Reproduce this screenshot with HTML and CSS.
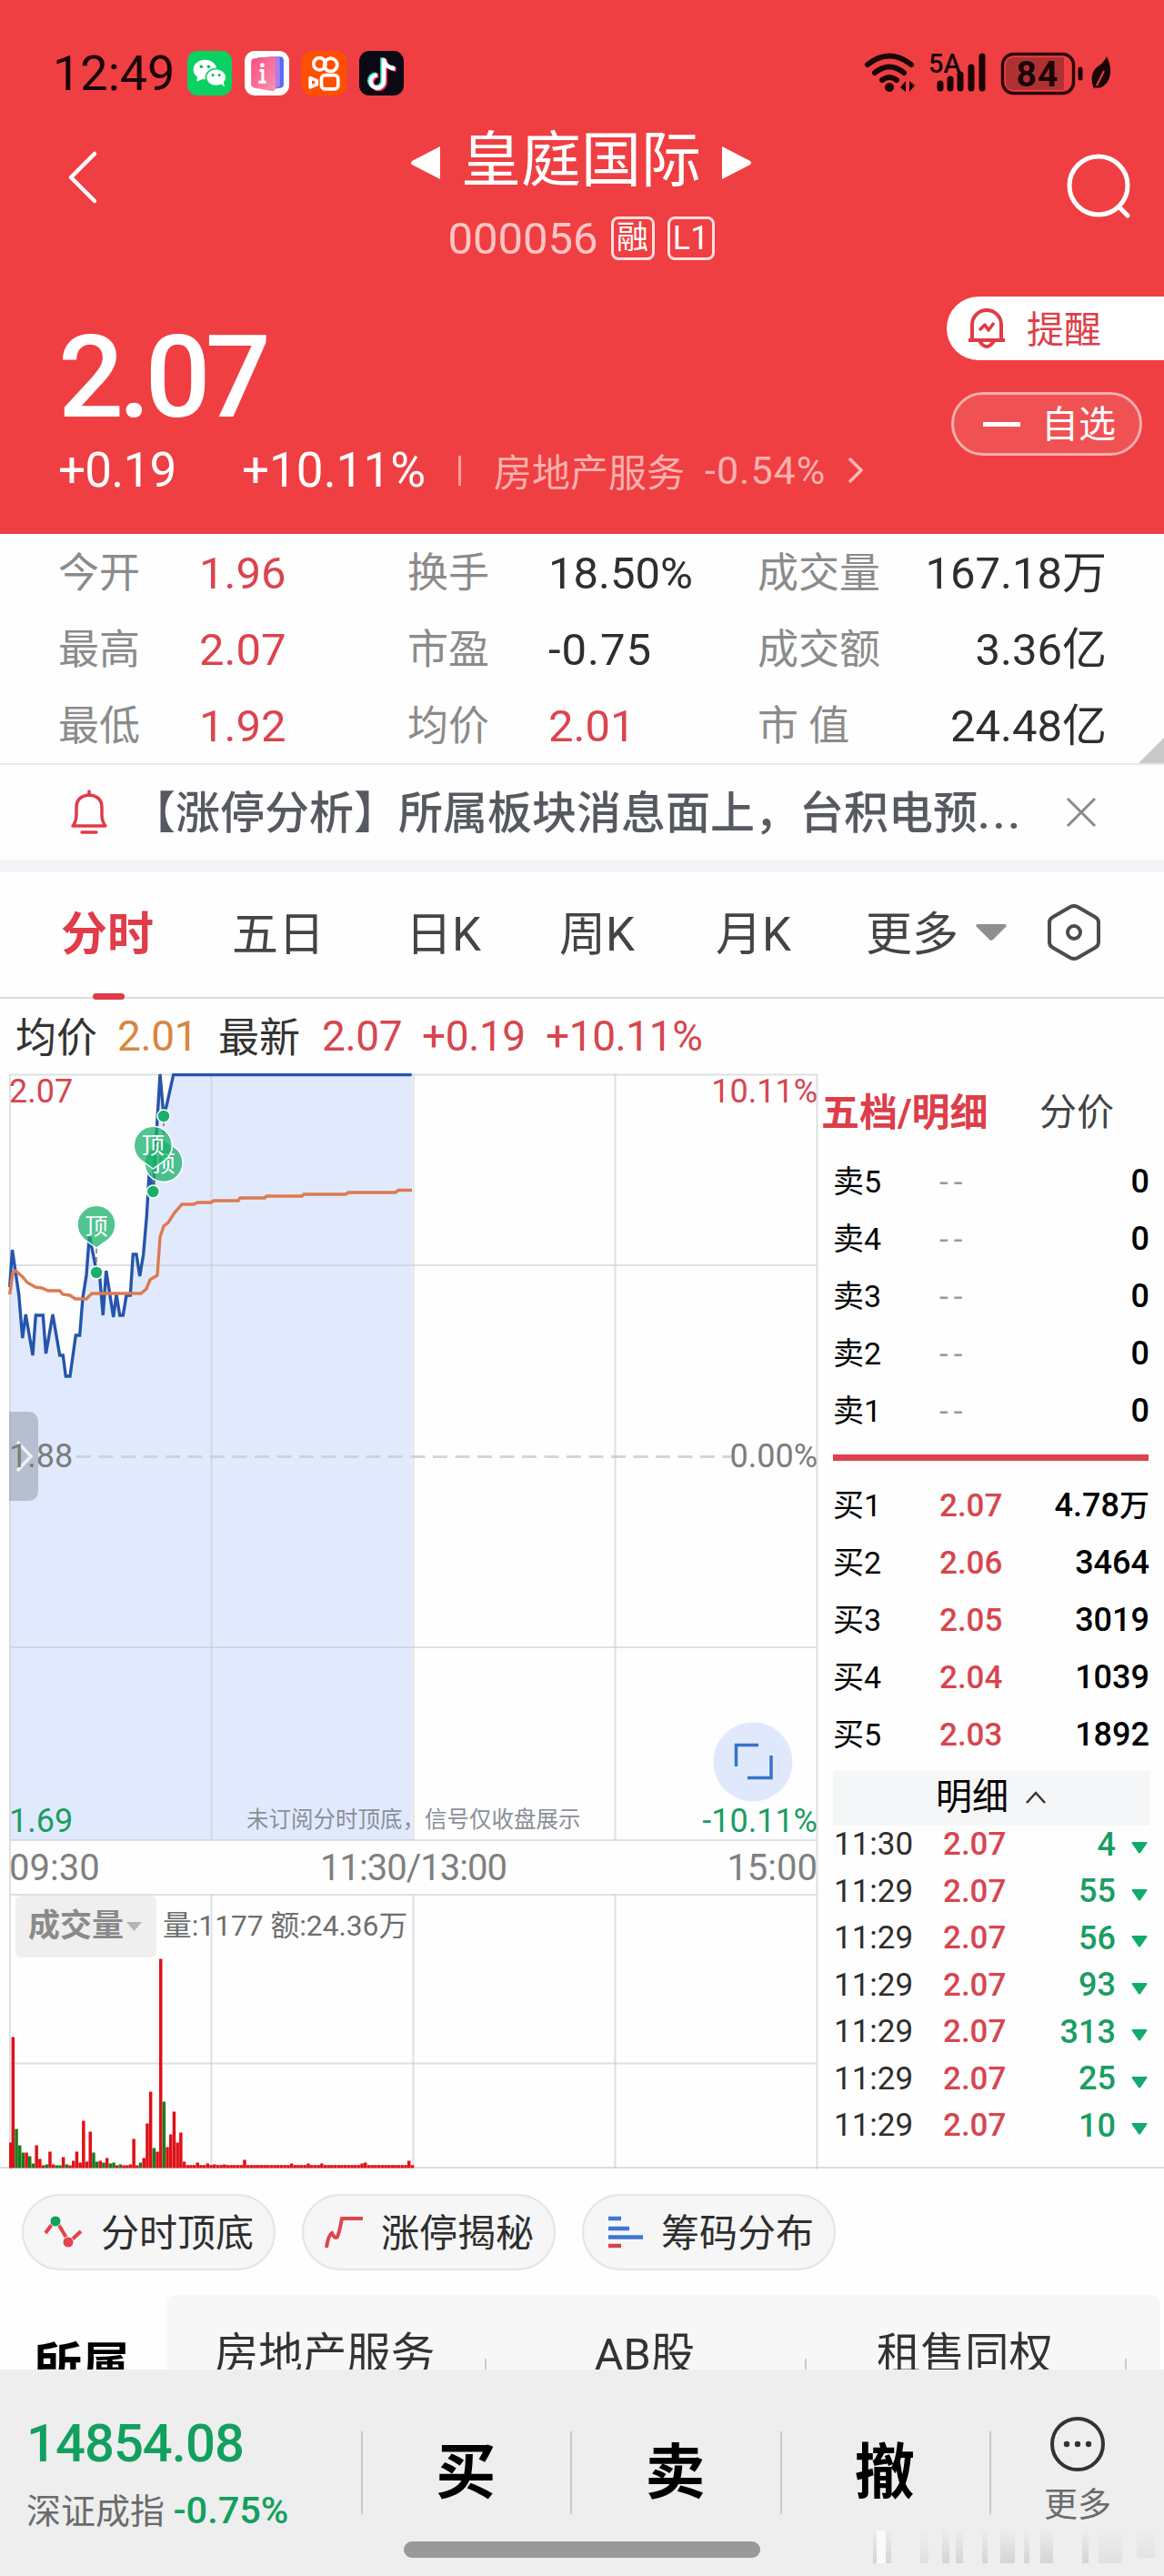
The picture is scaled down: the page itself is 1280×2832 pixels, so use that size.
FILE: index.html
```html
<!DOCTYPE html>
<html lang="zh-CN">
<head>
  <meta charset="UTF-8">
  <title>皇庭国际 000056</title>
  <link rel="stylesheet" href="styles.css">
</head>
<body>

<header class="header">
  <div class="status-bar">
    <span class="clock">12:49</span>
    <svg class="app-icon" viewBox="0 0 48 48">
      <rect width="48" height="48" rx="11" fill="#0bd064"/>
      <ellipse cx="19" cy="20" rx="12.500" ry="10.500" fill="#fff"/>
      <path d="M11 27l-1 6 7-3z" fill="#fff"/>
      <ellipse cx="31" cy="28.500" rx="11" ry="9.300" fill="#fff" stroke="#0bd064" stroke-width="1.500"/>
      <path d="M36 35l4 4-1-7z" fill="#fff"/>
      <circle cx="15" cy="17" r="1.700" fill="#0bb457"/><circle cx="23" cy="17" r="1.700" fill="#0bb457"/>
      <circle cx="27.500" cy="26" r="1.500" fill="#0bb457"/><circle cx="34.500" cy="26" r="1.500" fill="#0bb457"/>
    </svg>
    <svg class="app-icon" viewBox="0 0 48 48">
      <defs><linearGradient id="book" x1="0" y1="0" x2="1" y2="1"><stop offset="0" stop-color="#fb4b7b"/><stop offset="1" stop-color="#f894b4"/></linearGradient></defs>
      <rect width="48" height="48" rx="11" fill="#fff"/>
      <path d="M14 7l24-1q4 0 4 4v26q0 4-4 4l-14 2z" fill="#4f6df2"/>
      <path d="M12 8l22-2q4 0 4 4v28l-8 4z" fill="#b57bea"/>
      <path d="M7 12q0-4 4-4l18-2q4 0 4 4v30q0 4-4 3l-18-3q-4-1-4-4z" fill="url(#book)"/>
      <circle cx="19" cy="15.500" r="2.400" fill="#fff"/>
      <path d="M16 21h3.500v12M15 33.500h8" stroke="#fff" stroke-width="3" fill="none"/>
    </svg>
    <svg class="app-icon" viewBox="0 0 48 48">
      <rect width="48" height="48" rx="11" fill="#ff5000"/>
      <g fill="none" stroke="#fff" stroke-width="3.600">
        <circle cx="19" cy="14" r="6.500"/><circle cx="31" cy="15" r="7"/>
        <rect x="21" y="26" width="18" height="15" rx="4"/>
        <path d="M9 29v10l7-3v-4z" stroke-linejoin="round"/>
      </g>
    </svg>
    <svg class="app-icon" viewBox="0 0 48 48">
      <rect width="48" height="48" rx="11" fill="#0b0a14"/>
      <g fill="none" stroke-width="4.500">
        <path d="M25 7v25a7 7 0 1 1-7-7M25 9q2 8 12 9" stroke="#22e5e0"/>
        <path d="M28 9v25a7 7 0 1 1-7-7M28 11q2 8 12 9" stroke="#fb2c55"/>
        <path d="M26.500 8v25a7 7 0 1 1-7-7M26.500 10q2 8 12 9" stroke="#fff"/>
      </g>
    </svg>
    <svg class="signals" width="280" height="56" viewBox="945 52 280 56">
      <g fill="none" stroke="#1a0506" stroke-width="6" stroke-linecap="round">
        <path d="M954 71q24-19 48 0"/><path d="M962 80q16-13 32 0"/><path d="M970 88q8-6 16 0"/>
      </g>
      <circle cx="978" cy="96" r="5" fill="#1a0506"/>
      <path d="M990 96l6-7v12zM1006 94l-6-5v12z" fill="#1a0506"/>
      <text class="net" x="1021" y="80">5A</text>
      <g stroke="#1a0506" stroke-width="7" stroke-linecap="round">
        <path d="M1034 92v5M1045 87v10M1056 82v15M1068 74v23M1080 62v35"/>
      </g>
      <rect x="1102.500" y="59.500" width="78" height="43" rx="12" fill="none" stroke="#2b0708" stroke-width="3.500"/>
      <path d="M1115 63h55v36h-55q-9 0-9-9v-18q0-9 9-9z" fill="#b03134"/>
      <text class="battery" x="1141" y="95">84</text>
      <path d="M1188 76v10" stroke="#1a0506" stroke-width="5" stroke-linecap="round"/>
      <path d="M1217 62c6 12 6 26-4 33q-5 3-9 1l-1 2q-6-16 3-24 8-5 11-12z" fill="#1a0506"/>
      <path d="M1214 78l-8 16" stroke="#ef3f42" stroke-width="2"/>
    </svg>
  </div>

  <div class="title-bar">
    <svg class="back" width="34" height="60" viewBox="0 0 34 60"><path d="M30 4L4 30l26 26" fill="none" stroke="#fff" stroke-width="4.500" stroke-linecap="round" stroke-linejoin="round"/></svg>
    <div class="title">
      <div class="name">
        <svg width="34" height="38" viewBox="0 0 34 38"><path d="M33 1v36L2 21q-2-2 0-4z" fill="#fff"/></svg>
        <h1>皇庭国际</h1>
        <svg width="34" height="38" viewBox="0 0 34 38"><path d="M1 1v36l31-16q2-2 0-4z" fill="#fff"/></svg>
      </div>
      <div class="code">000056 <span class="tag">融</span><span class="tag l1">L1</span></div>
    </div>
    <svg class="search" width="76" height="76" viewBox="0 0 76 76"><g fill="none" stroke="#fff" stroke-width="5" stroke-linecap="round"><circle cx="36" cy="36" r="32"/><path d="M59 60l9 9"/></g></svg>
  </div>

  <div class="quote">
    <div class="price">2.07</div>
    <div class="change">
      <span class="diff">+0.19</span><span class="pct">+10.11%</span><i></i>
      <span class="sector">房地产服务</span><span class="sector-pct">-0.54%</span>
      <svg width="18" height="30" viewBox="0 0 18 30"><path d="M2 2l13 13L2 28" fill="none" stroke="#fbb7b5" stroke-width="3.500"/></svg>
    </div>
  </div>
  <div class="quote-actions">
    <button class="remind">
      <svg width="44" height="48" viewBox="0 0 44 48"><g fill="none" stroke="#e03c46" stroke-width="4" stroke-linejoin="round"><path d="M2 37h40M6 37V20a16 16 0 0 1 32 0v17"/><path d="M14 38q8 12 16 0"/><path d="M14 26l6-6 4 6 6-8" stroke-width="3.500"/></g></svg>
      提醒
    </button>
    <button class="watch"><b></b>自选</button>
  </div>
</header>

<section class="stats">
  <span>今开</span><em class="up">1.96</em><span>换手</span><em>18.50%</em><span>成交量</span><em class="last">167.18万</em>
  <span>最高</span><em class="up">2.07</em><span>市盈</span><em class="minus">-0.75</em><span>成交额</span><em class="last">3.36亿</em>
  <span>最低</span><em class="up">1.92</em><span>均价</span><em class="up">2.01</em><span>市 值</span><em class="last">24.48亿</em>
  <svg class="corner" width="28" height="28" viewBox="0 0 28 28"><path d="M28 0v28H0z" fill="#c9c9c9"/></svg>
</section>

<section class="notice">
  <svg width="42" height="50" viewBox="0 0 42 50"><g fill="none" stroke="#e03c46" stroke-width="3.500" stroke-linejoin="round"><path d="M3 40q4-5 4-12V20q0-13 14-14 14 1 14 14v8q0 7 4 12zM21 6V2M13 47h16" stroke-linecap="round"/></g></svg>
  <p>【涨停分析】所属板块消息面上，台积电预<span>...</span></p>
  <svg width="34" height="34" viewBox="0 0 34 34"><path d="M2 2l30 30M32 2L2 32" stroke="#8a8a8c" stroke-width="3"/></svg>
</section>

<nav class="periods">
  <a class="active">分时</a><a>五日</a><a>日K</a><a>周K</a><a>月K</a><a>更多</a>
  <svg class="drop" width="34" height="18" viewBox="0 0 34 18"><path d="M2 0h30q3 1 1 3L19 17q-2 2-4 0L1 3q-2-2 1-3z" fill="#8f8f8f"/></svg>
  <svg class="hex" width="58" height="64" viewBox="0 0 58 64"><g fill="none" stroke="#4c4c4c" stroke-width="4" stroke-linejoin="round"><path d="M25 4q4-2 8 0l19 11q4 2 4 6v22q0 4-4 6L33 60q-4 2-8 0L6 49q-4-2-4-6V21q0-4 4-6z"/><circle cx="29" cy="32" r="7"/></g></svg>
</nav>

<div class="summary">
  <span>均价</span><em class="avg">2.01</em><span>最新</span><em>2.07</em><em>+0.19</em><em>+10.11%</em>
</div>

<main class="board">
  <svg class="chart" width="900" height="1206" viewBox="0 0 900 1206">
    <!-- price area -->
    <path id="area" fill="#e1eafd"/>
    <g class="grid">
      <path d="M11 1V1205M898.500 1V1205M10 1.500H899M10 211H898M10 631H898M10 843H899M10 903H899M10 1088.500H898"/>
      <path d="M232.500 1V843M454.500 1V843M676.500 1V843M232.500 903V1204M454.500 903V1204M676.500 903V1204"/>
      <path class="dash" d="M84 421.500H805"/>
    </g>
    <polyline id="priceLine" class="price-line"/>
    <polyline class="avg-line" points="10.700,243 14,219 17.300,217 25,224 30,230 39,235 46,236 53,239 65.700,239 69,243 76.700,244 83,248 95,248 101,242 155,242 161,237 165,227 173,222 176,180 180,168 185,164 192,153 200,144 213,144 217,142 232,142 235,140 262,140 264,137 291,137 293,135 332,135 334,133 380,133 383,131 435,131 438,128.500 453,128.500"/>
    <!-- top signals -->
    <g class="pin">
      <path class="stem" d="M106 192v22M180 52v20M168.300 105v20"/>
      <path d="M180 73l-13 9a21 21 0 1 0 26 0z"/><text x="180" y="108">顶</text>
      <path d="M168.300 105l-14-10a21 21 0 1 1 28 0z"/><text x="168.300" y="88">顶</text>
      <path d="M106 192l-14-10a21 21 0 1 1 28 0z"/><text x="106" y="177">顶</text>
      <circle cx="106" cy="219" r="7"/><circle cx="168.300" cy="130" r="7"/><circle cx="180" cy="47" r="7"/>
    </g>
    <path d="M10 372h20q12 0 12 12v74q0 12-12 12H10z" fill="#8b93a3" fill-opacity=".5"/>
    <path d="M19 405l15 16-15 16" fill="none" stroke="#fff" stroke-opacity=".8" stroke-width="3.500"/>
    <g class="scale">
      <text class="up" x="10" y="32">2.07</text><text class="up end" x="899" y="32">10.11%</text>
      <text x="10" y="433">1.88</text><text class="end" x="899" y="433">0.00%</text>
      <text class="down" x="10" y="834">1.69</text><text class="down end" x="899" y="834">-10.11%</text>
    </g>
    <text class="hint" x="271" y="829">未订阅分时顶底，信号仅收盘展示</text>
    <g class="axis">
      <text x="10" y="887">09:30</text><text class="mid" x="455" y="887" textLength="206">11:30/13:00</text><text class="end" x="899" y="887">15:00</text>
    </g>
    <circle cx="828" cy="757" r="43.500" fill="#dfe9fb"/>
    <path d="M809.500 762v-23.500H834M848 750v24.500h-26" fill="none" stroke="#3a73c9" stroke-width="3.500"/>
    <!-- volume -->
    <rect x="17" y="904" width="155" height="68" rx="6" fill="#efefef"/>
    <text class="vol-name" x="31" y="949">成交量</text>
    <path d="M139 933h17l-8.500 10z" fill="#b5b5b5"/>
    <text class="vol-text" x="179" y="948">量:1177 额:24.36万</text>
    <g id="volume"></g>
  </svg>

  <aside class="depth">
    <div class="depth-tabs"><b>五档/明细</b><span>分价</span></div>
    <div class="orders sell">
      <p><span>卖5</span><i>--</i><b>0</b></p>
      <p><span>卖4</span><i>--</i><b>0</b></p>
      <p><span>卖3</span><i>--</i><b>0</b></p>
      <p><span>卖2</span><i>--</i><b>0</b></p>
      <p><span>卖1</span><i>--</i><b>0</b></p>
    </div>
    <hr>
    <div class="orders">
      <p><span>买1</span><i>2.07</i><b>4.78<small>万</small></b></p>
      <p><span>买2</span><i>2.06</i><b>3464</b></p>
      <p><span>买3</span><i>2.05</i><b>3019</b></p>
      <p><span>买4</span><i>2.04</i><b>1039</b></p>
      <p><span>买5</span><i>2.03</i><b>1892</b></p>
    </div>
    <h3>明细 <svg width="24" height="16" viewBox="0 0 24 16"><path d="M2 14L12 3l10 11" fill="none" stroke="#333" stroke-width="2.500"/></svg></h3>
    <div class="trades" id="trades"></div>
  </aside>
</main>

<section class="tools">
  <button>
    <svg width="46" height="38" viewBox="0 0 46 38"><path d="M3 20L14 5l15 25 13-12" fill="none" stroke="#e0444c" stroke-width="4"/><circle cx="14" cy="7" r="6" fill="#12a05f" stroke="#f6f6f7"/><circle cx="28" cy="30" r="6" fill="#e0444c" stroke="#f6f6f7"/></svg>
    <span>分时顶底</span>
  </button>
  <button>
    <svg width="46" height="38" viewBox="0 0 46 38"><path d="M4 36q2-14 6-16 3 7 6 4 2-4 5-20h23" fill="none" stroke="#e0444c" stroke-width="4"/></svg>
    <span>涨停揭秘</span>
  </button>
  <button>
    <svg width="46" height="38" viewBox="0 0 46 38"><path d="M6 4h14M6 15h23M6 24.500h38" stroke="#3f76d2" stroke-width="4.500"/><path d="M6 34h14" stroke="#d2444f" stroke-width="4.500"/></svg>
    <span>筹码分布</span>
  </button>
</section>

<section class="belong">
  <h2>所属</h2>
  <div class="plates"><span>房地产服务</span><span>AB股</span><span>租售同权</span></div>
</section>

<footer class="trade-bar">
  <div class="index">
    <strong>14854.08</strong>
    <p>深证成指 <b>-0.75%</b></p>
  </div>
  <button>买</button>
  <button>卖</button>
  <button>撤</button>
  <div class="more">
    <svg width="62" height="62" viewBox="0 0 62 62"><circle cx="31" cy="31" r="28" fill="none" stroke="#333" stroke-width="4"/><g fill="#333"><circle cx="19" cy="31" r="3.200"/><circle cx="31" cy="31" r="3.200"/><circle cx="43" cy="31" r="3.200"/></g></svg>
    更多
  </div>
  <svg class="smear" width="320" height="38" viewBox="0 0 320 38">
    <defs><linearGradient id="fade" x1="0" y1="0" x2="0" y2="1"><stop offset="0" stop-color="#999" stop-opacity="0"/><stop offset="1" stop-color="#999" stop-opacity=".3"/></linearGradient></defs>
    <g fill="url(#fade)"><path d="M0 0h20v38H0zM76 0h8v38h-8zM91 0h8v38h-8zM120 0h6v38h-6zM140 0h16v38h-16zM166 0h6v38h-6zM184 0h14v38h-14zM230 0h7v38h-7z"/><path d="M52 0h9v38h-9zM248 0h26v38h-26zM290 0h20v32h-20z" opacity=".5"/></g>
    <path d="M4 2h10v36H4z" fill="#fafafa"/>
  </svg>
  <div class="home"></div>
</footer>

<script>
const price = '10.7,235 13.5,194 20.7,243 24.7,291 28.3,265 36,310 39.3,266 47.3,266 50.5,308 58,265 65.7,310 69.3,310 72.3,333 77,333 83.3,288 87.7,288 91,247 95,222 98.3,178 106,217 109.5,222 113.3,266 116.7,217 124.7,268 128,243 131.7,266 135.3,266 139,244 143.3,244 146.3,199 150,199 153.7,223 157.7,199 161.3,157 164,110 168.3,130 172,67 176,1 180,47 183.3,35 190.7,1.5 452.7,1.5';
document.getElementById('priceLine').setAttribute('points', price);
document.getElementById('area').setAttribute('d', 'M' + price.replace(/ /g, 'L') + 'V843H10.7Z');

// minute volumes, g = falling minute
const volumes = '28 144 43g 25g 17g 17 13g 5g 25 10 3 4g 18 4 3g 3g 12 4g 3 8 18 6 52 7 40 17g 7g 8 6g 11 5g 6g 3 4g 3 3 4 32 3 6g 11 49 84 22g 18 230 73g 23 37 62 28 39 7'.split(' ');
const spikes = { 56: 6, 59: 5, 61: 4, 64: 4, 70: 9, 84: 5, 89: 5, 93: 5, 105: 5, 106: 6, 119: 8 };
let bars = '';
for (let i = 0; i <= 120; i++) {
  const v = volumes[i] || String(spikes[i] || 3.3);
  const h = parseFloat(v);
  const x = Math.max(10, 8.9 + i * 3.69);
  bars += `<rect x="${x.toFixed(1)}" y="${1203.5 - h}" width="3.5" height="${h}" fill="${v.includes('g') ? '#1c7a1c' : '#de1216'}"/>`;
}
document.getElementById('volume').innerHTML = bars;

const trades = [['11:30', 4], ['11:29', 55], ['11:29', 56], ['11:29', 93], ['11:29', 313], ['11:29', 25], ['11:29', 10]];
document.getElementById('trades').innerHTML = trades.map(t =>
  `<p><span>${t[0]}</span><i>2.07</i><b>${t[1]}</b><svg width="18" height="13" viewBox="0 0 18 13"><path d="M1 0h16q1 1 0 2l-7 10q-1 1-2 0L1 2q-1-1 0-2z" fill="#10ab6d"/></svg></p>`
).join('');
</script>

</body>
</html>
```
FILE: styles.css
```css
* { box-sizing: border-box; margin: 0; padding: 0; }
body { width: 1280px; height: 2832px; overflow: hidden; background: #fefefe; color: #333; font-family: Roboto, "Noto Sans CJK SC", sans-serif; }
svg { display: block; flex: none; }
em, i { font-style: normal; }
button { border: none; font-family: inherit; color: inherit; }

/* header */
.header { position: relative; height: 587px; background: #ef3f42; color: #fff; }
.status-bar { height: 160px; display: flex; align-items: center; padding-left: 58px; color: #1a0506; }
.clock { width: 148px; font-size: 54px; }
.app-icon { width: 49px; height: 49px; margin-right: 14px; }
.signals { margin-left: 487px; }
.net { font-size: 29px; font-weight: 500; fill: #1a0506; }
.battery { font-size: 39px; font-weight: 700; fill: #1a0506; text-anchor: middle; letter-spacing: 1px; }
.title-bar { height: 140px; display: flex; justify-content: space-between; padding: 0 32px 0 74px; }
.back { margin-top: 5px; }
.search { margin-top: 8px; }
.title { width: 700px; padding-right: 2px; }
.name { height: 68px; display: flex; align-items: center; justify-content: center; gap: 22px; margin-top: -16px; }
.name svg { margin-top: 2px; }
.name h1 { font-size: 66px; font-weight: 400; line-height: 68px; margin-top: -2px; }
.code { display: flex; align-items: center; justify-content: center; height: 50px; margin-top: 25px; font-size: 49px; color: #fbc5c4; }
.tag { width: 48px; height: 48px; margin-left: 14px; border: 3px solid #fdd; border-radius: 8px; font-size: 35px; line-height: 42px; text-align: center; color: #fff; }
.tag.l1 { width: 52px; font-size: 36px; }
.quote { padding-left: 64px; }
.price { height: 175px; padding-top: 20px; font-size: 127px; font-weight: 500; line-height: 190px; letter-spacing: -6px; }
.change { display: flex; align-items: center; height: 84px; font-size: 53px; }
.diff { width: 202px; letter-spacing: -0.8px; }
.pct { width: 238px; }
.change i { width: 3px; height: 33px; background: #f9a3a1; }
.sector { width: 234px; padding: 0 0 2px 36px; font-size: 42px; color: #fbb0ae; white-space: nowrap; }
.sector-pct { width: 155px; padding-left: 34px; font-size: 43px; letter-spacing: 1px; color: #fbb0ae; margin-right: 36px; }
.quote-actions { position: absolute; top: 326px; right: 0; width: 239px; }
.quote-actions button { display: flex; align-items: center; height: 70px; font-size: 41px; }
.remind { width: 239px; padding: 0 0 4px 22px; gap: 22px; background: #fff; color: #dc3f49; border-radius: 35px 0 0 35px; }
.remind svg { margin-top: 4px; }
.quote-actions .watch { width: 210px; margin: 35px 0 0 5px; padding: 0 0 6px 32px; gap: 23px; background: #f05254; border: 3px solid #f9aeac; border-radius: 35px; color: #fff; }
.watch b { width: 41px; height: 5px; background: #fff; margin-top: 6px; }

/* stats */
.stats { position: relative; display: grid; grid-template-columns: 155px 229px 155px 230px 155px 229px; grid-auto-rows: 84px; height: 254px; padding: 2px 0 0 64px; align-items: center; line-height: 84px; border-bottom: 2px solid #e8e8ea; }
.stats span { font-size: 45px; color: #8b8b8b; }
.stats em { font-size: 49px; color: #2e2e2e; white-space: nowrap; }
.stats .minus { letter-spacing: 1px; }
.stats .up { color: #dc444d; }
.stats .last { text-align: right; }
.corner { position: absolute; right: 0; bottom: 0; }

.notice { height: 104px; display: flex; align-items: center; padding: 0 74px 0 77px; }
.notice p { flex: 1; margin: -8px 0 0 25px; font-size: 49px; font-weight: 500; color: #565a60; white-space: nowrap; }
.notice p span { letter-spacing: 3px; }

/* period tabs */
.periods { position: relative; display: flex; align-items: center; height: 153px; padding: 0 0 9px 67px; border-top: 14px solid #f3f4f7; border-bottom: 2px solid #dcdcde; font-size: 51px; color: #444; }
.periods a { width: 188px; white-space: nowrap; }
.periods a:nth-child(2) { width: 191px; }
.periods a:nth-child(3) { width: 169px; }
.periods a:nth-child(4) { width: 172px; }
.periods a:nth-child(5) { width: 165px; }
.periods a:nth-child(6) { width: 121px; }
.periods .active { color: #e03c49; font-weight: 700; }
.periods .active::after { content: ""; position: absolute; left: 102px; bottom: -3px; width: 35px; height: 7px; border-radius: 4px; background: #e03c49; }
.drop { margin-top: 4px; }
.hex { margin: 4px 0 0 45px; }

.summary { display: flex; align-items: center; height: 82px; padding-left: 17px; font-size: 46px; }
.summary span { width: 112px; font-size: 45px; padding-bottom: 3px; }
.summary em { width: 110px; color: #d6464f; letter-spacing: -0.4px; }
.summary .avg { color: #d5883f; }
.summary em.avg { width: 111px; }
.summary span:nth-child(3) { width: 114px; }
.summary em:nth-child(5) { width: 136px; }

/* chart */
.board { display: flex; height: 1204px; border-bottom: 2px solid #dedede; }
.grid path { fill: none; stroke: #c7ccd4; stroke-opacity: .6; stroke-width: 2; }
.grid .dash { stroke-width: 3; stroke-dasharray: 16 8.5; stroke-opacity: .8; }
.price-line { fill: none; stroke: #2555ab; stroke-width: 3.4; }
.avg-line { fill: none; stroke: #dd7a50; stroke-width: 3.4; }
.pin path, .pin circle { fill: #18b069; stroke: #fff; stroke-width: 1.5; }
.pin path { fill-opacity: .75; }
.pin .stem { fill: none; stroke: #777; stroke-dasharray: 6 4; }
.pin text { font-size: 25px; fill: #fff; text-anchor: middle; }
.scale text { font-size: 36px; fill: #7d7d7d; }
.chart .scale .up { fill: #d6464f; }
.chart .scale .down { fill: #1a9d64; }
.chart .end { text-anchor: end; }
.chart .mid { text-anchor: middle; }
.hint { font-size: 24.5px; fill: #8b8f98; }
.axis text { font-size: 40px; fill: #808080; }
.vol-name { font-size: 35px; font-weight: 700; fill: #8a8a8a; }
.vol-text { font-size: 31.7px; fill: #6e6e6e; }

/* order book */
.depth { width: 380px; padding: 12px 16px 0 16px; }
.depth-tabs { display: flex; height: 74px; margin: -10px 0 0 -13px; align-items: center; font-size: 42px; white-space: nowrap; }
.depth-tabs b { width: 240px; color: #dc3e4a; font-weight: 700; }
.depth-tabs span { font-size: 41px; color: #444; }
.orders { font-size: 36px; color: #000; }
.orders.sell { padding-top: 12px; }
.orders p { display: flex; height: 63px; align-items: center; line-height: 63px; }
.orders span { width: 117px; font-size: 34px; }
.orders i { width: 80px; font-size: 35px; color: #d6464f; font-weight: 500; white-space: nowrap; }
.orders.sell i { color: #999; font-weight: 400; letter-spacing: 6px; }
.orders b { flex: 1; text-align: right; font-weight: 500; white-space: nowrap; }
.orders small { font-size: 33px; }
.depth hr { height: 7px; width: 347px; margin: 16px 0 18px; border: none; background: #de414c; }
.depth h3 { display: flex; align-items: center; justify-content: center; gap: 18px; height: 60px; margin: 8px 0 -7px; padding: 0 2px 2px; background: #f5f6f8; font-size: 40px; font-weight: 400; color: #000; line-height: 58px; }
.trades { font-size: 36px; padding-top: 2px; }
.trades p { display: flex; height: 51.5px; align-items: center; color: #2e2e2e; }
.trades span { width: 121px; padding-left: 1px; font-size: 35px; }
.trades i { width: 80px; font-size: 35px; color: #d6464f; font-weight: 500; }
.trades b { width: 110px; text-align: right; font-weight: 500; color: #1a9d64; }
.trades svg { margin: 8px 0 0 17px; }

/* tool pills */
.tools { display: flex; gap: 29px; height: 139px; padding: 28px 0 0 24px; }
.tools button { display: flex; align-items: center; width: 279px; height: 84px; padding-left: 21px; gap: 18px; border: 2px solid #e3e4e6; border-radius: 42px; background: #f6f6f7; font-size: 42px; color: #2e2e2e; white-space: nowrap; }
.tools span { margin-top: -6px; }

.belong { display: flex; height: 82px; overflow: hidden; }
.belong h2 { width: 183px; padding-left: 37px; font-size: 53px; line-height: 156px; color: #000; font-weight: 700; }
.plates { display: flex; width: 1093px; height: 160px; background: #f7f7f8; border-radius: 10px; line-height: 132px; font-size: 48.5px; color: #333; }
.plates span { width: 352px; padding-right: 4px; text-align: center; background: linear-gradient(#ccc, #ccc) no-repeat right 70px / 2px 60px; }

/* bottom bar */
.trade-bar { position: relative; display: flex; height: 227px; background: #eee; }
.index { width: 397px; padding: 50px 0 0 29px; color: #12a05f; }
.index strong { display: block; font-size: 58px; font-weight: 500; line-height: 62px; letter-spacing: -1px; }
.index p { margin-top: 16px; font-size: 38px; line-height: 54px; color: #6b6b6b; white-space: nowrap; }
.index b { font-size: 41.5px; font-weight: 500; color: #12a05f; }
.trade-bar button { width: 230.3px; height: 91px; margin-top: 68px; padding-right: 2px; border-left: 2px solid #c8c8c8; background: none; font-size: 66px; font-weight: 700; color: #000; line-height: 82px; }
.more { display: flex; flex-direction: column; align-items: center; width: 192px; height: 91px; margin-top: 68px; border-left: 2px solid #c8c8c8; font-size: 37px; line-height: 54px; color: #6b6b6b; }
.more svg { margin: -17px 0 10px; }
.smear { position: absolute; left: 960px; top: 175px; }
.home { position: absolute; left: 444px; top: 189px; width: 392px; height: 18px; border-radius: 9px; background: #999; }
```
